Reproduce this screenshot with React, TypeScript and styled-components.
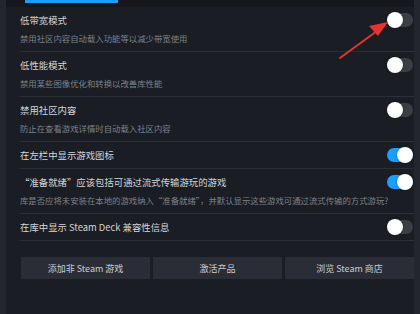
import React from "react";
import styled, { createGlobalStyle } from "styled-components";

const Global = createGlobalStyle`
  html, body { margin: 0; padding: 0; background: #1a1d24; }
  body { font-family: "Noto Sans CJK SC", "Noto Sans", sans-serif; }
  * { box-sizing: border-box; }
`;

const Page = styled.div`
  position: relative;
  width: 420px;
  height: 314px;
  display: flex;
  background: #1a1d24;
  overflow: hidden;
`;

const SideStrip = styled.div<{ $w: number }>`
  width: ${(p) => p.$w}px;
  flex: none;
  background: #23262d;
`;

const Main = styled.div`
  flex: 1;
  display: flex;
  flex-direction: column;
`;

const TopBar = styled.div`
  height: 7px;
  background: #15171d;
  padding-left: 19px;
`;

const Tab = styled.div`
  width: 93px;
  height: 3px;
  background: #1a9fff;
`;

const Content = styled.div`
  padding: 0 0 0 14px;
  display: flex;
  flex-direction: column;
`;

const Row = styled.div`
  display: flex;
  flex-direction: column;
  gap: 6px;
  padding: 7px 0 7px;
  border-bottom: 1px solid #2a2e36;
`;

const TitleLine = styled.div`
  display: flex;
  align-items: center;
  justify-content: space-between;
  height: 12px;
`;

const Title = styled.div`
  font-size: 9.4px;
  line-height: 12px;
  color: #d3d6da;
  white-space: nowrap;
  margin-top: -1px;
`;

const Desc = styled.div`
  font-size: 8.4px;
  line-height: 12px;
  color: #7c828b;
  white-space: nowrap;
`;

const Track = styled.div<{ $on: boolean }>`
  position: relative;
  width: 26px;
  height: 14px;
  border-radius: 7px;
  margin-right: 1px;
  background: ${(p) => (p.$on ? "#1a9fff" : "#3b3e45")};
  flex: none;
`;

const Knob = styled.div<{ $on: boolean }>`
  position: absolute;
  top: -1px;
  left: ${(p) => (p.$on ? "10px" : "0px")};
  width: 16px;
  height: 16px;
  border-radius: 50%;
  background: #ffffff;
  box-shadow: 0 0 2px rgba(0, 0, 0, 0.5);
`;

const Buttons = styled.div`
  display: grid;
  grid-template-columns: 1fr 1fr 1fr;
  gap: 3px;
  margin-top: 16px;
  padding-left: 1px;
`;

const Button = styled.div`
  height: 22px;
  background: #2a2d35;
  color: #c9ccd1;
  font-size: 9px;
  display: flex;
  align-items: center;
  justify-content: center;
  border-radius: 1px;
`;

const Arrow = styled.svg`
  position: absolute;
  left: 0;
  top: 0;
  pointer-events: none;
`;

type Item = { title: string; desc?: string; on: boolean };

const items: Item[] = [
  { title: "低带宽模式", desc: "禁用社区内容自动载入功能等以减少带宽使用", on: false },
  { title: "低性能模式", desc: "禁用某些图像优化和转换以改善库性能", on: false },
  { title: "禁用社区内容", desc: "防止在查看游戏详情时自动载入社区内容", on: false },
  { title: "在左栏中显示游戏图标", on: true },
  {
    title: "“准备就绪”应该包括可通过流式传输游玩的游戏",
    desc: "库是否应将未安装在本地的游戏纳入“准备就绪”，并默认显示这些游戏可通过流式传输的方式游玩?",
    on: true,
  },
  { title: "在库中显示 Steam Deck 兼容性信息", on: false },
];

export default function App() {
  return (
    <Page>
      <Global />
      <SideStrip $w={6} />
      <Main>
        <TopBar>
          <Tab />
        </TopBar>
        <Content>
          {items.map((it, i) => (
            <Row key={i}>
              <TitleLine>
                <Title>{it.title}</Title>
                <Track $on={it.on}>
                  <Knob $on={it.on} />
                </Track>
              </TitleLine>
              {it.desc && <Desc>{it.desc}</Desc>}
            </Row>
          ))}
          <Buttons>
            <Button>添加非 Steam 游戏</Button>
            <Button>激活产品</Button>
            <Button>浏览 Steam 商店</Button>
          </Buttons>
        </Content>
      </Main>
      <SideStrip $w={6} />
      <Arrow width="420" height="314" viewBox="0 0 420 314">
        <line x1="340" y1="58" x2="377" y2="31" stroke="#e5332f" strokeWidth="2" strokeLinecap="round" />
        <polygon points="388,22 369,26 378,36" fill="#e5332f" />
      </Arrow>
    </Page>
  );
}
